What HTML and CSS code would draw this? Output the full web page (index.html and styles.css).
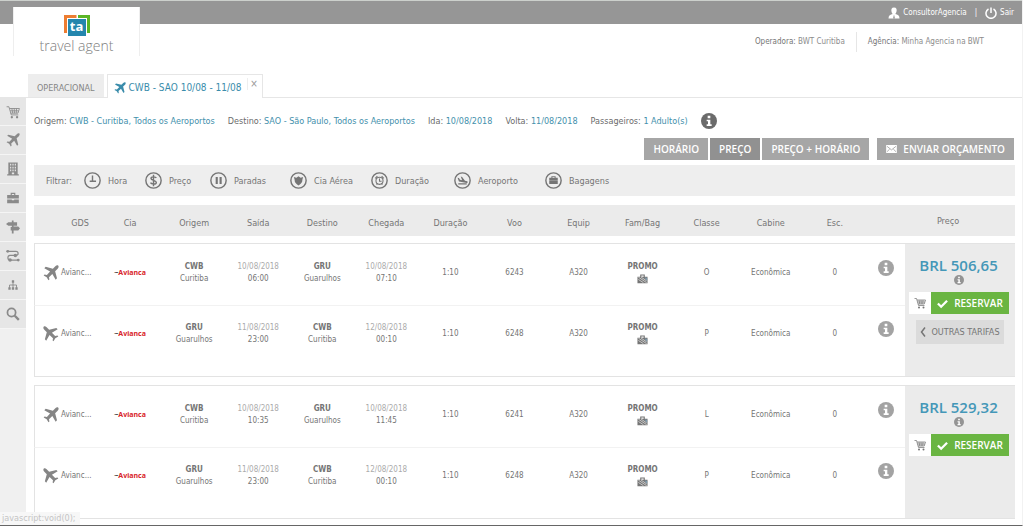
FILE: index.html
```html
<!DOCTYPE html>
<html lang="pt-BR">
<head>
<meta charset="utf-8">
<title>Travel Agent</title>
<link rel="stylesheet" href="styles.css">
</head>
<body>
<svg class="sprite" width="0" height="0" aria-hidden="true">
  <symbol id="plane" viewBox="0 0 24 24"><path d="M23 1c-1.300-1-3.200-.3-4.500 1L14.800 5.700 4 2.800 2 4.800l8.600 5L5.800 15l-3.500-.6L1 15.800l4.500 2.700L8.200 23l1.400-1.300-.6-3.500 5-4.800 5 8.600 2-2-2.800-10.800L22 5.500c1.200-1.300 2-3.300 1-4.500z"/></symbol>
  <symbol id="cart" viewBox="0 0 24 24"><path d="M1 3h4l4 14h12M6 6h17l-2.500 8H8M10 6l1.500 8M14 6l.5 8M18 6l-.5 8M7 10h14.500" fill="none" stroke="currentColor" stroke-width="1.500"/><circle cx="10" cy="21" r="2"/><circle cx="19" cy="21" r="2"/></symbol>
  <symbol id="case" viewBox="0 0 24 24"><path d="M8 7V3h8v4h6v6H2V7zm2 0h4V5h-4zM2 14.500h8v1.500h4v-1.500h8V21H2z" fill-rule="evenodd"/></symbol>
  <symbol id="info" viewBox="0 0 24 24"><circle cx="12" cy="12" r="12"/><path d="M10 4h4v4h-4zM8.500 10H14v7h2v2.500H8.500V17h2v-4.500h-2z" fill="#fff"/></symbol>
  <symbol id="bag" viewBox="0 0 24 24"><path d="M7 7V2h10v5h6v14H1V7zm2.500 0h5V4.500h-5z" fill-rule="evenodd"/><path d="M3 8l18 12M9 8l12 8M3 13l11 7" stroke="#fff" stroke-width="1.300"/><path d="M17 10h4v5" fill="none" stroke="#7fa3ba" stroke-width="2"/></symbol>
  <symbol id="check" viewBox="0 0 24 24"><path d="M2 12l7 7L22 6" fill="none" stroke="currentColor" stroke-width="5"/></symbol>
</svg>

<header class="top">
  <div class="userbar">
    <svg class="i12" viewBox="0 0 24 24"><path d="M12 1c5 0 6 4 5 8-.5 2-1.500 4-2.500 5 5 1 8.500 3 8.500 9H1c0-6 3.500-8 8.500-9C8 13 7.500 11 7 9c-1-4 0-8 5-8z"/><path d="M12 15l-2 8h4z" fill="#969696"/></svg>
    <span>ConsultorAgencia</span><span class="bar">|</span>
    <a class="exit" href="#"><svg class="i12" viewBox="0 0 24 24"><path d="M7 4a10 10 0 1 0 10 0M12 1v11" fill="none" stroke="currentColor" stroke-width="3"/></svg>Sair</a>
  </div>
  <a class="logo" href="#" aria-label="travel agent">
    <span class="mark"><svg viewBox="0 0 26 21"><path d="M12.500 1.500h-11V18" fill="none" stroke="#ed7d31" stroke-width="3"/><path d="M14 1.500h10.500V18" fill="none" stroke="#5bb526" stroke-width="3"/><path d="M4 4h18v17H4z" fill="#2486ad"/></svg><b>ta</b></span>
    <span class="word">travel agent</span>
  </a>
  <div class="agency"><span>Operadora: <em>BWT Curitiba</em></span><span>Agência: <em>Minha Agencia na BWT</em></span></div>
</header>

<nav class="tabs">
  <a class="tab" href="#">OPERACIONAL</a>
  <div class="tab active"><svg class="i12" viewBox="0 0 24 24"><use href="#plane"/></svg><a href="#">CWB - SAO 10/08 - 11/08</a><button class="close" aria-label="Fechar">×</button></div>
</nav>

<div class="body">
  <aside class="side">
    <a href="#" aria-label="Carrinho"><svg viewBox="0 0 24 24"><use href="#cart"/></svg></a>
    <a href="#" aria-label="Aéreo"><svg viewBox="0 0 24 24"><use href="#plane"/></svg></a>
    <a href="#" aria-label="Hotel"><svg viewBox="0 0 24 24"><path d="M4 1h16v20h2v2H2v-2h2zm3 2v3h2V3zm4 0v3h2V3zm4 0v3h2V3zM7 8v3h2V8zm4 0v3h2V8zm4 0v3h2V8zm-8 5v3h2v-3zm4 0v3h2v-3zm4 0v3h2v-3zm-5 5v3h4v-3z" fill-rule="evenodd"/></svg></a>
    <a href="#" aria-label="Pacotes"><svg viewBox="0 0 24 24"><use href="#case"/></svg></a>
    <a href="#" aria-label="Passeios"><svg viewBox="0 0 24 24"><path d="M10 1h3v3h6v6h-6v1h8l3 3-3 4h-8v5h-3v-5H8v-6h2v-2H4L0 7l4-3h6z"/></svg></a>
    <a href="#" aria-label="Roteiro"><svg viewBox="0 0 24 24"><path d="M4 4h13c5 0 5 7 0 7H7c-5 0-5 8 0 8h12" fill="none" stroke="currentColor" stroke-width="2"/><circle cx="3" cy="4" r="2.500"/><circle cx="16" cy="11" r="3"/><circle cx="7" cy="19" r="3"/><circle cx="21" cy="19" r="2.500"/></svg></a>
    <a href="#" aria-label="Estrutura"><svg viewBox="0 0 24 24"><path d="M12 7v10M6 17v-5h12v5" fill="none" stroke="currentColor" stroke-width="1.500"/><path d="M10 4h4v4h-4zM4 16h4v4H4zM10 16h4v4h-4zM16 16h4v4h-4z"/></svg></a>
    <a href="#" aria-label="Buscar"><svg viewBox="0 0 24 24"><circle cx="9.500" cy="9.500" r="7" fill="none" stroke="currentColor" stroke-width="3"/><path d="M15 15l7 7" stroke="currentColor" stroke-width="4"/></svg></a>
  </aside>

  <main class="main">
    <div class="route">
      <span>Origem: <em>CWB - Curitiba, Todos os Aeroportos</em></span>
      <span>Destino: <em>SAO - São Paulo, Todos os Aeroportos</em></span>
      <span>Ida: <em>10/08/2018</em></span>
      <span>Volta: <em>11/08/2018</em></span>
      <span>Passageiros: <em>1 Adulto(s)</em></span>
      <svg class="i16" viewBox="0 0 24 24"><use href="#info"/></svg>
    </div>
    <div class="actions">
      <button>HORÁRIO</button><button class="on">PREÇO</button><button>PREÇO + HORÁRIO</button>
      <button class="send"><svg class="mail" viewBox="0 0 24 18"><path d="M0 0h24v18H0z"/><path d="M2 3l10 8 10-8M2 15l6-6M22 15l-6-6" fill="none" stroke="#a6a6a6" stroke-width="2"/></svg>ENVIAR ORÇAMENTO</button>
    </div>
    <div class="filters">
      <span>Filtrar:</span>
      <a href="#"><svg viewBox="0 0 24 24"><circle class="ring" cx="12" cy="12" r="10.800"/><path class="ln" d="M12 5v8h5M12 13H8"/></svg>Hora</a>
      <a href="#"><svg viewBox="0 0 24 24"><circle class="ring" cx="12" cy="12" r="10.800"/><path class="ln" d="M16 8.500c-1-2-7.500-2.500-7.500.7 0 3.300 7.500 2 7.500 5.500 0 3-7 3-8.200.3M12 4v16"/></svg>Preço</a>
      <a href="#"><svg viewBox="0 0 24 24"><circle class="ring" cx="12" cy="12" r="10.800"/><path d="M8 7h3v10H8zM13.500 7h3v10h-3z"/></svg>Paradas</a>
      <a href="#"><svg viewBox="0 0 24 24"><circle class="ring" cx="12" cy="12" r="10.800"/><path d="M5.500 7l3.500 1 3-2 3 2 3.500-1-1 4c0 4-2 6-5.500 8-3.500-2-5.500-4-5.500-8z"/></svg>Cia Aérea</a>
      <a href="#"><svg viewBox="0 0 24 24"><circle class="ring" cx="12" cy="12" r="10.800"/><circle cx="12" cy="12.500" r="5" fill="none" stroke="currentColor" stroke-width="1.500"/><path d="M12 9v4h3M6 9l3-3M18 9l-3-3M8 18l1-2M16 18l-1-2" fill="none" stroke="currentColor" stroke-width="1.500"/></svg>Duração</a>
      <a href="#"><svg viewBox="0 0 24 24"><circle class="ring" cx="12" cy="12" r="10.800"/><path d="M5 8l2 .5 1.500 2.500 3 .5-2-5 2 .5 4 5.500 3 .5c1.500.5 1 2.500-.5 2.500L7 13.500zM6 16h12v1.500H6z"/></svg>Aeroporto</a>
      <a href="#"><svg viewBox="0 0 24 24"><circle class="ring" cx="12" cy="12" r="10.800"/><path d="M9 8V6h6v2h3v4H6V8zm1.500 0h3v-1h-3zM6 12.500h12V17H6z" fill-rule="evenodd"/></svg>Bagagens</a>
    </div>

    <table class="flights">
      <colgroup><col span="13"><col class="c-info"><col class="c-price"></colgroup>
      <thead>
        <tr><th class="gds">GDS</th><th>Cia</th><th>Origem</th><th>Saída</th><th>Destino</th><th>Chegada</th><th>Duração</th><th>Voo</th><th>Equip</th><th>Fam/Bag</th><th>Classe</th><th>Cabine</th><th>Esc.</th><th></th><th class="hprice">Preço</th></tr>
      </thead>
      <tbody class="gap"><tr><td colspan="15"></td></tr></tbody>
      <tbody class="offer">
        <tr class="out">
          <td><span class="gdsc"><svg viewBox="0 0 24 24"><use href="#plane"/></svg>Avianc...</span></td>
          <td class="av"><i>~</i>Avianca</td>
          <td><b>CWB</b><br>Curitiba</td><td><small>10/08/2018</small><br>06:00</td><td><b>GRU</b><br>Guarulhos</td><td><small>10/08/2018</small><br>07:10</td>
          <td>1:10</td><td>6243</td><td>A320</td>
          <td class="fam"><b>PROMO</b><svg viewBox="0 0 24 24"><use href="#bag"/></svg></td>
          <td>O</td><td>Econômica</td><td>0</td>
          <td class="inf"><svg class="i16" viewBox="0 0 24 24"><use href="#info"/></svg></td>
          <td class="price" rowspan="2">
            <strong>BRL 506,65</strong><svg class="i10" viewBox="0 0 24 24"><use href="#info"/></svg>
            <div class="buy"><button class="add" aria-label="Adicionar ao carrinho"><svg viewBox="0 0 24 24"><use href="#cart"/></svg></button><button class="book"><svg viewBox="0 0 24 24"><use href="#check"/></svg>RESERVAR</button></div>
            <button class="other"><svg viewBox="0 0 12 24"><path d="M10 3L3 12l7 9" fill="none" stroke="currentColor" stroke-width="3"/></svg>OUTRAS TARIFAS</button>
          </td>
        </tr>
        <tr class="back">
          <td><span class="gdsc"><svg viewBox="0 0 24 24"><use href="#plane"/></svg>Avianc...</span></td>
          <td class="av"><i>~</i>Avianca</td>
          <td><b>GRU</b><br>Guarulhos</td><td><small>11/08/2018</small><br>23:00</td><td><b>CWB</b><br>Curitiba</td><td><small>12/08/2018</small><br>00:10</td>
          <td>1:10</td><td>6248</td><td>A320</td>
          <td class="fam"><b>PROMO</b><svg viewBox="0 0 24 24"><use href="#bag"/></svg></td>
          <td>P</td><td>Econômica</td><td>0</td>
          <td class="inf"><svg class="i16" viewBox="0 0 24 24"><use href="#info"/></svg></td>
        </tr>
      </tbody>
      <tbody class="gap"><tr><td colspan="15"></td></tr></tbody>
      <tbody class="offer">
        <tr class="out">
          <td><span class="gdsc"><svg viewBox="0 0 24 24"><use href="#plane"/></svg>Avianc...</span></td>
          <td class="av"><i>~</i>Avianca</td>
          <td><b>CWB</b><br>Curitiba</td><td><small>10/08/2018</small><br>10:35</td><td><b>GRU</b><br>Guarulhos</td><td><small>10/08/2018</small><br>11:45</td>
          <td>1:10</td><td>6241</td><td>A320</td>
          <td class="fam"><b>PROMO</b><svg viewBox="0 0 24 24"><use href="#bag"/></svg></td>
          <td>L</td><td>Econômica</td><td>0</td>
          <td class="inf"><svg class="i16" viewBox="0 0 24 24"><use href="#info"/></svg></td>
          <td class="price" rowspan="2">
            <strong>BRL 529,32</strong><svg class="i10" viewBox="0 0 24 24"><use href="#info"/></svg>
            <div class="buy"><button class="add" aria-label="Adicionar ao carrinho"><svg viewBox="0 0 24 24"><use href="#cart"/></svg></button><button class="book"><svg viewBox="0 0 24 24"><use href="#check"/></svg>RESERVAR</button></div>
          </td>
        </tr>
        <tr class="back">
          <td><span class="gdsc"><svg viewBox="0 0 24 24"><use href="#plane"/></svg>Avianc...</span></td>
          <td class="av"><i>~</i>Avianca</td>
          <td><b>GRU</b><br>Guarulhos</td><td><small>11/08/2018</small><br>23:00</td><td><b>CWB</b><br>Curitiba</td><td><small>12/08/2018</small><br>00:10</td>
          <td>1:10</td><td>6248</td><td>A320</td>
          <td class="fam"><b>PROMO</b><svg viewBox="0 0 24 24"><use href="#bag"/></svg></td>
          <td>P</td><td>Econômica</td><td>0</td>
          <td class="inf"><svg class="i16" viewBox="0 0 24 24"><use href="#info"/></svg></td>
        </tr>
      </tbody>
    </table>
  </main>
</div>
<div class="status">javascript:void(0);</div>
</body>
</html>
```
FILE: styles.css
```css
* { box-sizing: border-box; }
body {
  margin: 0;
  min-height: 100vh;
  display: flex;
  flex-direction: column;
  background: #fff;
  color: #757575;
  font: 9px/12px "DejaVu Sans Condensed", "Open Sans", sans-serif;
  border-right: 1px solid #f2f2f2;
  border-bottom: 1px solid #666;
}
a { color: inherit; text-decoration: none; }
em { font-style: normal; }
button { font: inherit; color: inherit; border: 0; padding: 0; background: none; }
svg { fill: currentColor; flex: none; }
.sprite { position: absolute; }
.i10 { width: 10px; height: 10px; }
.i12 { width: 12px; height: 12px; }
.i16 { width: 16px; height: 16px; }

.top {
  position: relative;
  height: 74px;
}
.userbar {
  display: flex;
  align-items: center;
  justify-content: flex-end;
  gap: 3px;
  height: 24px;
  padding-right: 8px;
  border-top: 1px solid #ccd0cc;
  background: #969696;
  color: #fff;
  font-size: 8px;
}
.bar { margin: 0 5px; }
.exit { display: flex; align-items: center; gap: 3px; }
.logo {
  position: absolute;
  left: 13px;
  top: 7px;
  width: 127px;
  height: 49px;
  padding-top: 8px;
  display: flex;
  flex-direction: column;
  align-items: center;
  background: #fff;
  border: solid #eee;
  border-width: 0 1px;
}
.mark { position: relative; width: 26px; height: 21px; }
.mark svg { display: block; }
.mark b {
  position: absolute;
  inset: 3px 0 0;
  text-align: center;
  color: #fff;
  font: 700 13px/16px "Open Sans", sans-serif;
}
.word { font: 300 14px/20px "Open Sans", sans-serif; color: #808080; }
.agency {
  display: flex;
  justify-content: flex-end;
  padding: 8px 38px 0 0;
  line-height: 20px;
  font-size: 8px;
}
.agency span + span { margin-left: 11px; padding-left: 11px; border-left: 1px solid #e6e6e6; }
.agency em { color: #8c8c8c; }

.tabs {
  display: flex;
  gap: 3px;
  height: 24px;
  padding-left: 28px;
  border-bottom: 1px solid #e6e6e6;
}
.tab {
  display: flex;
  align-items: center;
  height: 23px;
  padding: 4px 9px 0;
  background: #ededed;
  color: #858585;
}
.tab.active {
  height: 24px;
  gap: 3px;
  padding: 3px 3px 0 6px;
  background: #fff;
  border: solid #e6e6e6;
  border-width: 1px 1px 0;
  color: #3a8cab;
  font-size: 10px;
}
.close { align-self: flex-start; width: 12px; margin-left: 3px; border-left: 1px solid #eee; color: #999; }

.body { display: flex; flex: 1; }
.side { width: 26px; background: #f0f0f0; color: #8a8a8a; }
.side a {
  display: flex;
  align-items: center;
  justify-content: center;
  height: 29px;
  background: #e6e6e6;
  border-bottom: 1px solid #f5f5f5;
}
.side a:first-child { height: 28px; }
.side svg { width: 14px; height: 14px; }
.main { flex: 1; min-width: 0; padding: 15px 7px 6px 8px; }

.route {
  display: flex;
  align-items: center;
  gap: 13px;
  height: 16px;
  color: #6b6b6b;
}
.route em { color: #4490ac; }
.actions {
  display: flex;
  justify-content: flex-end;
  gap: 2px;
  margin: 9px 1px 5px 0;
}
.actions button {
  display: flex;
  align-items: center;
  gap: 6px;
  height: 22px;
  padding: 0 9px;
  background: #a6a6a6;
  color: #fff;
  font: 600 10px/22px "Open Sans", sans-serif;
}
.actions .on { background: #919191; }
.actions .send { margin-left: 6px; }
.mail { width: 11px; height: 8px; }

.filters {
  display: grid;
  grid-template-columns: 38px 61px 65px 80px 81px 83px 91px auto;
  align-items: center;
  height: 31px;
  padding-left: 12px;
  background: #eee;
}
.filters a { display: flex; align-items: center; gap: 7px; }
.filters svg { width: 17px; height: 17px; }
.ring { fill: none; stroke: currentColor; stroke-width: 2; }
.ln { fill: none; stroke: currentColor; stroke-width: 2; }

.flights {
  width: 100%;
  margin-top: 9px;
  table-layout: fixed;
  border-collapse: separate;
  border-spacing: 0;
  text-align: center;
  font-size: 8px;
}
.c-info { width: 38px; }
.c-price { width: 110px; }
.flights th, .flights td { padding: 0; }
.flights th { height: 31px; padding-top: 4px; background: #ebebeb; font-size: 9px; font-weight: 400; }
.flights .gds { padding-left: 28px; }
.flights .hprice { padding: 0 24px 0 0; }
.gap td { height: 8px; }
thead + .gap td { height: 7px; }
.offer .out td { height: 62px; padding-bottom: 4px; border-top: 1px solid #e3e3e3; }
.offer .back td { height: 72px; padding-bottom: 14px; border: solid #e3e3e3; border-width: 1px 0; border-top-color: #f2f2f2; }
.offer tr td:first-child { border-left: 1px solid #e3e3e3; }
.gdsc { display: flex; align-items: center; gap: 2px; padding-left: 8px; }
.gdsc svg { width: 16px; height: 16px; color: #858585; }
.back .gdsc svg { transform: rotate(-90deg); }
.flights .av { color: #d9262c; font: 700 7px/12px "Noto Sans", sans-serif; }
.av i { color: #555; font-style: normal; }
small { font-size: 8px; color: #ababab; }
.fam b, .fam svg { display: block; margin: 0 auto; }
.fam svg { width: 11px; height: 12px; }
.inf svg { display: block; margin: 0 auto 10px; color: #a3a3a3; }
.offer .out .price { padding: 11px 0 0; background: #ebebeb; border-bottom: 1px solid #e3e3e3; vertical-align: top; }
.price strong { display: block; padding-right: 3px; font: 600 15px/20px "Open Sans", sans-serif; color: #4497b8; }
.price .i10 { display: block; margin: 0 auto; padding-right: 2px; width: 12px; color: #949494; }
.buy { display: flex; margin: 7px 6px 6px 4px; }
.add { display: flex; align-items: center; justify-content: center; width: 22px; height: 22px; background: #fff; }
.add svg { width: 12px; height: 12px; }
.book {
  display: flex;
  flex: 1;
  align-items: center;
  justify-content: center;
  gap: 6px;
  height: 22px;
  background: #6ab542;
  color: #fff;
}
.price .book { font: 600 10px/22px "Open Sans", sans-serif; }
.book svg { width: 11px; height: 11px; }
.other {
  display: flex;
  align-items: center;
  justify-content: center;
  gap: 5px;
  width: 88px;
  height: 24px;
  margin: 0 auto;
  background: #dbdbdb;
}
.price .other { font-size: 9px; }
.other svg { width: 6px; height: 12px; }

.status {
  position: fixed;
  left: 0;
  bottom: 1px;
  padding: 0 4px 1px 2px;
  background: #f7f7f7;
  color: #c4c4c4;
}
```
